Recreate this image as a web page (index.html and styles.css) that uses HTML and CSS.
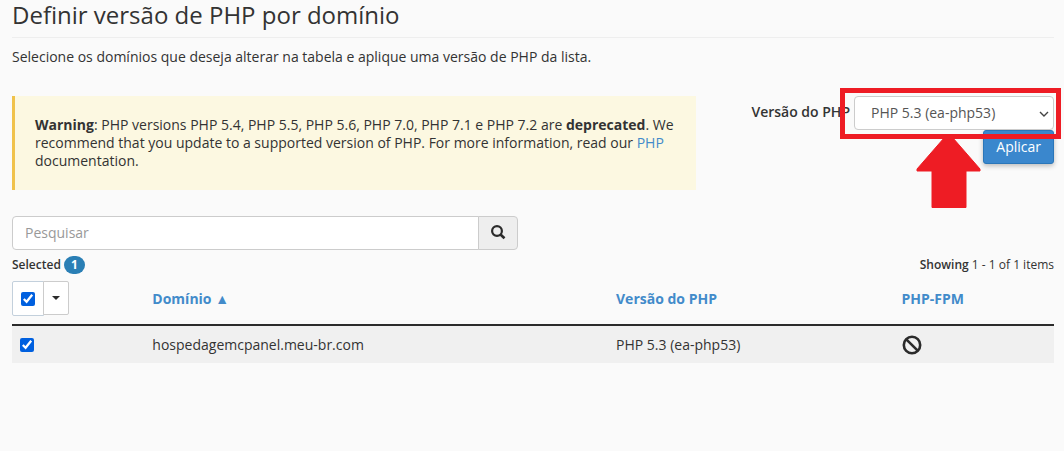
FILE: index.html
```html
<!DOCTYPE html>
<html lang="pt-BR">
<head>
  <meta charset="UTF-8" />
  <meta name="viewport" content="width=device-width, initial-scale=1.0" />
  <title>Definir versão de PHP por domínio</title>
  <link rel="stylesheet" href="styles.css">
</head>
<body>
  <h1>Definir versão de PHP por domínio</h1>
  <p class="intro">Selecione os domínios que deseja alterar na tabela e aplique uma versão de PHP da lista.</p>

  <div class="top-row">
    <div class="warning">
      <strong>Warning</strong>: PHP versions PHP 5.4, PHP 5.5, PHP 5.6, PHP 7.0, PHP 7.1 e PHP 7.2 are <strong>deprecated</strong>. We recommend that you update to a supported version of PHP. For more information, read our <a href="#">PHP</a> documentation.
    </div>
    <form class="version-form">
      <div class="version-field">
        <label for="phpVersion">Versão do PHP</label>
        <div class="select-wrap">
          <select id="phpVersion">
            <option>PHP 5.3 (ea-php53)</option>
          </select>
          <svg class="chevron" width="10" height="6" viewBox="0 0 10 6"><path d="M1 1l4 4 4-4" fill="none" stroke="#444" stroke-width="1.4"/></svg>
          <div class="highlight"></div>
          <svg class="arrow" width="66" height="70" viewBox="0 0 66 70"><path d="M28 0h9l27 31v2H50v36.500H16V33H1v-2z" fill="#ee1c24" stroke="#ee1c24" stroke-linejoin="round"/></svg>
        </div>
      </div>
      <button type="button" class="apply">Aplicar</button>
    </form>
  </div>

  <div class="search">
    <input type="text" placeholder="Pesquisar" aria-label="Pesquisar">
    <button type="button" aria-label="Buscar">
      <svg width="16" height="16" viewBox="0 0 16 16"><circle cx="7" cy="6" r="4.900" fill="none" stroke="#2b2b2b" stroke-width="2.200"/><path d="M10.500 9.500l4 3.800" stroke="#2b2b2b" stroke-width="2.600"/></svg>
    </button>
  </div>

  <div class="status">
    <div class="selected"><b>Selected</b> <span class="badge">1</span></div>
    <div><b>Showing</b> 1 - 1 of 1 items</div>
  </div>

  <table>
    <thead>
      <tr>
        <th class="col-check">
          <div class="check-group">
            <label class="check-all"><input type="checkbox" aria-label="Selecionar todos" checked></label>
            <button type="button" aria-label="Opções"><span class="caret"></span></button>
          </div>
        </th>
        <th class="col-domain"><a href="#">Domínio ▲</a></th>
        <th class="col-version"><a href="#">Versão do PHP</a></th>
        <th><a href="#">PHP-FPM</a></th>
      </tr>
    </thead>
    <tbody>
      <tr>
        <td><input type="checkbox" aria-label="hospedagemcpanel.meu-br.com" checked></td>
        <td>hospedagemcpanel.meu-br.com</td>
        <td>PHP 5.3 (ea-php53)</td>
        <td><svg class="ban" width="20" height="20" viewBox="0 0 20 20"><circle cx="10" cy="10" r="8.200" fill="none" stroke="#2b2b2b" stroke-width="2.600"/><path d="M4.300 4.300l11.400 11.400" stroke="#2b2b2b" stroke-width="2.600"/></svg></td>
      </tr>
    </tbody>
  </table>
</body>
</html>
```
FILE: styles.css
```css
:root {
  --text: #333;
  --link: #428bca;
  --border: #ccc;
  --red: #ee1c24;
}
* {
  box-sizing: border-box;
}
body {
  margin: 0;
  padding: 0 10px 20px 12px;
  background: #fafafa;
  color: var(--text);
  font-family: "Open Sans", sans-serif;
  font-size: 14px;
  line-height: 18px;
}
h1 {
  margin: 0;
  padding-bottom: 7px;
  border-bottom: 1px solid #eee;
  font-size: 24px;
  font-weight: 400;
  line-height: 30px;
}
a {
  color: var(--link);
  text-decoration: none;
}
button,
input,
select {
  font: inherit;
}
.intro {
  margin: 10px 0 30px;
}
.top-row {
  display: grid;
  grid-template-columns: 2fr 1fr;
  gap: 16px;
}
.warning {
  padding: 20px;
  border-left: 3px solid #f0c24b;
  background: #fcf8e1;
}
.version-form {
  display: flex;
  flex-direction: column;
  align-items: flex-end;
}
.version-field {
  display: flex;
  gap: 4px;
}
.version-field label {
  font-weight: 600;
  line-height: 32px;
  white-space: nowrap;
}
.select-wrap {
  position: relative;
  width: 200px;
}
select {
  display: block;
  width: 100%;
  height: 34px;
  padding: 0 16px;
  border: 1px solid var(--border);
  border-radius: 4px;
  background: #fff;
  color: #555;
  appearance: none;
}
.chevron {
  position: absolute;
  top: 15px;
  right: 5px;
}
/* callout drawn over the select */
.highlight {
  position: absolute;
  z-index: 1;
  inset: -8px -7px -9px -14px;
  border: 5px solid var(--red);
  pointer-events: none;
}
.arrow {
  position: absolute;
  z-index: 1;
  top: 42px;
  left: 62px;
  pointer-events: none;
}
.apply {
  height: 34px;
  padding: 0 12px;
  border: 1px solid #2a76b9;
  border-radius: 3px;
  background: #3a87cd;
  color: #fff;
  box-shadow: 0 2px 5px rgba(0, 0, 0, 0.25);
}
.search {
  display: flex;
  max-width: 506px;
  height: 34px;
  margin-top: 26px;
}
.search input {
  flex: 1;
  min-width: 0;
  padding: 0 12px;
  border: 1px solid var(--border);
  border-radius: 4px 0 0 4px;
  background: #fff;
}
.search input::placeholder {
  color: #999;
}
.search button {
  display: flex;
  align-items: center;
  justify-content: center;
  width: 40px;
  margin-left: -1px;
  padding: 0;
  border: 1px solid var(--border);
  border-radius: 0 4px 4px 0;
  background: #eee;
}
.status {
  display: flex;
  justify-content: space-between;
  margin: 6px 0 7px;
  font-size: 12px;
}
.status b {
  font-weight: 600;
}
.selected {
  display: flex;
  gap: 3px;
}
.badge {
  padding: 0 7px;
  border-radius: 9px;
  background: #2a7fb5;
  color: #fff;
  font-weight: 700;
}
table {
  width: 100%;
  border-collapse: collapse;
  table-layout: fixed;
}
th {
  padding: 0 8px 8px;
  border-bottom: 2px solid #2b2b2b;
  text-align: left;
}
.col-check {
  width: 12.7%;
  padding-left: 0;
}
.col-domain {
  width: 44.5%;
}
.col-version {
  width: 27.4%;
}
td {
  height: 38px;
  padding: 0 8px;
  background: #f0f0f0;
}
input[type="checkbox"] {
  display: block;
  width: 14px;
  height: 14px;
  margin: 0;
  accent-color: #0060df;
}
.check-group {
  display: flex;
  align-items: flex-start;
}
.check-all {
  display: flex;
  align-items: center;
  justify-content: center;
  width: 32px;
  height: 35px;
  border: 1px solid #c3d0dc;
  border-radius: 2px 0 0 2px;
  background: #fff;
}
.check-group button {
  display: flex;
  align-items: center;
  justify-content: center;
  width: 26px;
  height: 34px;
  margin-left: -1px;
  padding: 0;
  border: 1px solid var(--border);
  border-radius: 0 2px 2px 0;
  background: #fff;
}
.caret {
  border-top: 4px solid #2b2b2b;
  border-right: 4px solid transparent;
  border-left: 4px solid transparent;
}
.ban {
  display: block;
}
```
